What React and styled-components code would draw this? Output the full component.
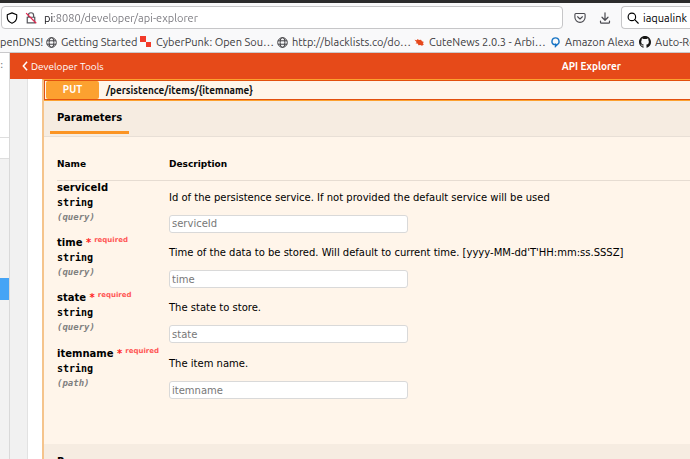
import React from "react";
import styled, { createGlobalStyle, css } from "styled-components";

const uiFont = css`
  font-family: Ubuntu, "Noto Sans", "Open Sans", sans-serif;
`;

const GlobalStyle = createGlobalStyle`
  *, *::before, *::after { box-sizing: border-box; }
  body { margin: 0; background: #fff; color: #000; font-family: "DejaVu Sans", sans-serif; font-size: 10px; }
  input, button { font: inherit; color: inherit; }
`;

const Browser = styled.div`
  display: flex;
  flex-direction: column;
  height: 100vh;
  overflow: hidden;
`;

const Chrome = styled.header`
  ${uiFont}
  flex: none;
  background: #f9f9fa;
  border-top: 3px solid #2c2c2c;
  border-bottom: 1px solid #c9c9cb;
`;

const NavBar = styled.div`
  display: flex;
  align-items: center;
  height: 29px;
  padding-left: 1px;
`;

const Field = styled.label`
  display: flex;
  align-items: center;
  height: 23px;
  background: #fff;
  border: 1px solid #c6c6c8;
  border-radius: 4px;
`;

const AddressField = styled(Field)`
  flex: 1;
  min-width: 0;
  gap: 7px;
  padding-left: 4px;
`;

const SearchField = styled(Field)`
  width: 69px;
  gap: 4px;
  padding-left: 5px;
  border-right: 0;
  border-radius: 4px 0 0 4px;
`;

const FieldInput = styled.input`
  flex: 1;
  min-width: 0;
  padding: 0;
  border: 0;
  outline: 0;
  background: transparent;
  font-size: 11px;
  line-height: 18px;
`;

const AddressInput = styled(FieldInput)`
  background: linear-gradient(to right, #15141a 10px, #77767c 10px);
  background-clip: text;
  -webkit-background-clip: text;
  color: transparent;
`;

const IconButton = styled.button`
  display: flex;
  justify-content: center;
  width: 25px;
  padding: 0;
  border: 0;
  background: none;
  color: #4a4a50;
`;

const NavActions = styled.div`
  display: flex;
  padding: 0 4px;
`;

const Bookmarks = styled.nav`
  display: flex;
  align-items: center;
  height: 20px;
`;

const Bookmark = styled.a`
  display: flex;
  align-items: center;
  flex: none;
  gap: 4px;
  width: ${(p) => p.$width}px;
  color: #3c3b40;
  font-size: 11px;
  line-height: 16px;
  text-decoration: none;
  white-space: nowrap;
`;

const Glyph = styled.svg`
  flex: none;
  width: ${(p) => p.$size}px;
  height: ${(p) => p.$size}px;
  fill: none;
  stroke: currentColor;
`;

const Workspace = styled.div`
  display: flex;
  flex: 1;
  min-height: 0;
`;

const Sidebar = styled.aside`
  display: flex;
  flex-direction: column;
  flex: none;
  width: 10px;
  background: #f2f2f2;
  border-right: 1px solid #d9d9d9;
`;

const SidebarTop = styled.div`
  height: 85px;
  padding-top: 6px;
  background: #fff;
  border-bottom: 1px solid #dedede;
  color: #777;
`;

const SidebarRow = styled.div`
  height: 21px;
  background: #fff;
  border-bottom: 1px solid #dedede;
`;

const SidebarSelected = styled.div`
  height: 22px;
  margin-top: 119px;
  background: #45a4f5;
`;

const Main = styled.main`
  display: flex;
  flex-direction: column;
  flex: 1;
  min-width: 0;
`;

const TitleBar = styled.header`
  ${uiFont}
  display: flex;
  align-items: center;
  justify-content: space-between;
  flex: none;
  height: 26px;
  padding: 0 69px 0 10px;
  background: #e64a19;
  color: #fff;
  font-size: 10px;
`;

const BackLink = styled.a`
  display: flex;
  align-items: center;
  gap: 1px;
  color: inherit;
  text-decoration: none;
`;

const PageTitle = styled.h1`
  margin: 0;
  font-size: 10px;
`;

const Canvas = styled.div`
  flex: 1;
  min-height: 0;
  padding-left: 17px;
  background: #f1f1f1;
`;

const Sheet = styled.div`
  height: 100%;
  padding-left: 14px;
  background: #fff;
  border-left: 1px solid #e2e2e2;
`;

const Operation = styled.section`
  height: 100%;
  background: #fff5ea;
  border-top: 1px solid #fca130;
  border-left: 2px solid #f5c48c;
`;

const Summary = styled.button`
  ${uiFont}
  display: flex;
  align-items: center;
  gap: 7px;
  width: 100%;
  height: 20px;
  padding: 0 0 0 1px;
  background: #fff5ea;
  border: 1px solid #e2500f;
  border-right: 0;
  color: #111;
  font-size: 10px;
  font-weight: 700;
  text-align: left;
`;

const Method = styled.span`
  width: 53px;
  height: 18px;
  background: #fca130;
  border-radius: 2px;
  color: #fff;
  line-height: 18px;
  text-align: center;
`;

const SectionHeader = styled.div`
  display: flex;
  align-items: stretch;
  height: 37px;
  padding-left: 6px;
  background: #f6ece1;
  border-top: 1px solid ${(p) => (p.$first ? "#fca130" : "#f6ece1")};
  border-bottom: 1px solid #e8dfd6;
`;

const Tab = styled.h2`
  margin: 0 0 2px;
  padding: 0 7px;
  border-bottom: 3px solid ${(p) => (p.$active ? "#fb9423" : "transparent")};
  font-size: 10px;
  line-height: 33px;
`;

const ParameterPanel = styled.div`
  height: 307px;
  padding: 15px 0 0 13px;
`;

const ParameterTable = styled.table`
  width: 100%;
  border-collapse: collapse;
  table-layout: fixed;
`;

const HeadCell = styled.th`
  width: ${(p) => p.$width || "auto"};
  height: 28px;
  padding: 0 0 3px;
  border-bottom: 1px solid #e6dcd2;
  font-size: 9px;
  text-align: left;
`;

const Cell = styled.td`
  height: ${(p) => p.$height}px;
  padding: 0;
  vertical-align: top;
  white-space: nowrap;
`;

const ParameterName = styled.label`
  display: block;
  height: 14px;
  font-weight: 700;
  line-height: 14px;
`;

const Required = styled.span`
  color: #f22;

  sup {
    margin-left: 3px;
    color: #f55;
    font-size: 7px;
    line-height: 1;
  }
`;

const ParameterType = styled.div`
  font-family: "DejaVu Sans Mono", monospace;
  font-weight: 700;
  line-height: 16px;
`;

const ParameterLocation = styled.div`
  color: #808080;
  font-family: "DejaVu Sans Mono", monospace;
  font-size: 9px;
  font-style: italic;
  font-weight: 700;
  line-height: 12px;
`;

const Description = styled.p`
  margin: 10px 0;
  line-height: 14px;
`;

const ParameterInput = styled.input`
  display: block;
  width: 239px;
  height: 18px;
  padding: 0 2px;
  background: #fff;
  border: 1px solid #d9d9d9;
  border-radius: 3px;

  &::placeholder {
    color: #777;
    opacity: 1;
  }
`;

function Globe() {
  return (
    <Glyph $size={11} viewBox="0 0 16 16" strokeWidth="1.4">
      <circle cx="8" cy="8" r="7" />
      <ellipse cx="8" cy="8" rx="3.4" ry="7" />
      <path d="M1.5 5.5h13M1.5 10.5h13" />
    </Glyph>
  );
}

function Shield() {
  return (
    <Glyph $size={12} viewBox="0 0 16 16" strokeWidth="1.5" strokeLinejoin="round">
      <path d="M8 1.2 14.3 3.6V7c0 3.5-2.5 6.5-6.3 8C4.2 13.5 1.7 10.5 1.7 7V3.6Z" />
    </Glyph>
  );
}

function InsecureLock() {
  return (
    <Glyph $size={12} viewBox="0 0 16 16" strokeWidth="1.6">
      <path d="M4.5 7V4.5a3.500 3.500 0 0 1 7 0V7M3 7h10v7.500H3Z" stroke="#55555b" />
      <path d="M1.500 1.500 15 15" stroke="#e22850" strokeWidth="1.7" />
    </Glyph>
  );
}

function Pocket() {
  return (
    <Glyph $size={12} viewBox="0 0 16 16" strokeWidth="1.5" strokeLinecap="round" strokeLinejoin="round">
      <path d="M2.500 2h11c.8 0 1.300.5 1.300 1.300V7A6.800 6.800 0 0 1 1.200 7V3.300C1.200 2.500 1.700 2 2.500 2Z" />
      <path d="m4.800 6.300 3.200 3 3.200-3" />
    </Glyph>
  );
}

function Download() {
  return (
    <Glyph $size={12} viewBox="0 0 16 16" strokeWidth="1.6" strokeLinecap="round" strokeLinejoin="round">
      <path d="M8 1v9.500M4 7l4 4 4-4M2 12v1.500c0 .8.5 1.300 1.300 1.300h9.400c.8 0 1.300-.5 1.300-1.300V12" />
    </Glyph>
  );
}

function SearchIcon() {
  return (
    <Glyph $size={12} viewBox="0 0 16 16" strokeWidth="1.5" strokeLinecap="round">
      <circle cx="6.5" cy="6.5" r="5" />
      <path d="m10.300 10.300 4.700 4.700" />
    </Glyph>
  );
}

function RedSquares() {
  return (
    <Glyph $size={12} viewBox="0 0 12 12">
      <path d="M0 0h6v6H0ZM6 6h5v5H6Z" fill="#f23b2a" stroke="none" />
    </Glyph>
  );
}

function CuteNewsIcon() {
  return (
    <Glyph $size={11} viewBox="0 0 11 11">
      <path d="M.5 2.800 3 3.200 3.400 2 5 3.100 7 2.800 8 4.300 10 5 8.800 6l1 1.400L8 8.700 6.300 8 4.300 8.300 4 6.700 1.500 6.300 2.700 5.200Z" fill="#e6491d" stroke="none" />
    </Glyph>
  );
}

function AlexaIcon() {
  return (
    <Glyph $size={11} viewBox="0 0 16 18">
      <path d="M8 1.500a5.800 5.800 0 0 1 2.800 10.900L8 14.500V11.800L5.400 12.500A5.800 5.800 0 0 1 8 1.500Z" stroke="#1573c4" strokeWidth="2.2" />
      <path d="M7 11v7l5-5.500Z" fill="#1573c4" stroke="none" />
    </Glyph>
  );
}

function GithubIcon() {
  return (
    <Glyph $size={12} viewBox="0 0 16 16">
      <path
        fill="#161514"
        stroke="none"
        d="M8 0C3.580 0 0 3.580 0 8c0 3.540 2.290 6.530 5.470 7.590.4.070.55-.17.55-.38v-1.490c-2.010.37-2.530-.49-2.690-.94-.09-.23-.48-.94-.82-1.130-.28-.15-.68-.52-.01-.53.63-.01 1.080.58 1.230.82.72 1.210 1.870.87 2.330.66.070-.52.28-.87.51-1.070-1.780-.2-3.640-.89-3.640-3.950 0-.87.31-1.590.82-2.150-.08-.2-.36-1.020.08-2.120 0 0 .67-.21 2.200.82a7.600 7.600 0 0 1 4 0c1.530-1.040 2.200-.82 2.200-.82.44 1.100.16 1.920.08 2.120.51.56.82 1.270.82 2.150 0 3.070-1.870 3.750-3.650 3.950.29.25.54.73.54 1.480v2.200c0 .21.15.46.55.38A8 8 0 0 0 16 8c0-4.420-3.580-8-8-8Z"
      />
    </Glyph>
  );
}

const bookmarks = [
  { label: "penDNS!", width: 46 },
  { label: "Getting Started", width: 94, icon: <Globe /> },
  { label: "CyberPunk: Open Sou…", width: 137, icon: <RedSquares /> },
  { label: "http://blacklists.co/do…", width: 137, icon: <Globe /> },
  { label: "CuteNews 2.0.3 - Arbi…", width: 136, icon: <CuteNewsIcon /> },
  { label: "Amazon Alexa", width: 89, icon: <AlexaIcon /> },
  { label: "Auto-Ro", width: 90, icon: <GithubIcon /> },
];

const parameters = [
  {
    name: "serviceId",
    location: "query",
    description: "Id of the persistence service. If not provided the default service will be used",
    height: 56,
  },
  {
    name: "time",
    location: "query",
    required: true,
    description: "Time of the data to be stored. Will default to current time. [yyyy-MM-dd'T'HH:mm:ss.SSSZ]",
    height: 55,
  },
  { name: "state", location: "query", required: true, description: "The state to store.", height: 56 },
  { name: "itemname", location: "path", required: true, description: "The item name.", height: 55 },
];

function ParameterRow({ parameter }) {
  const id = `param-${parameter.name}`;
  return (
    <tr>
      <Cell $height={parameter.height}>
        <ParameterName htmlFor={id}>
          {parameter.name}
          {parameter.required && (
            <Required>
              {" *"}
              <sup>required</sup>
            </Required>
          )}
        </ParameterName>
        <ParameterType>string</ParameterType>
        <ParameterLocation>({parameter.location})</ParameterLocation>
      </Cell>
      <Cell $height={parameter.height}>
        <Description>{parameter.description}</Description>
        <ParameterInput id={id} type="text" placeholder={parameter.name} />
      </Cell>
    </tr>
  );
}

export default function App() {
  return (
    <Browser>
      <GlobalStyle />
      <Chrome>
        <NavBar>
          <AddressField>
            <Shield />
            <InsecureLock />
            <AddressInput aria-label="Address" defaultValue="pi:8080/developer/api-explorer" />
          </AddressField>
          <NavActions>
            <IconButton aria-label="Save to Pocket">
              <Pocket />
            </IconButton>
            <IconButton aria-label="Downloads">
              <Download />
            </IconButton>
          </NavActions>
          <SearchField>
            <SearchIcon />
            <FieldInput aria-label="Search" defaultValue="iaqualink" />
          </SearchField>
        </NavBar>
        <Bookmarks>
          {bookmarks.map((b) => (
            <Bookmark key={b.label} href="#" $width={b.width}>
              {b.icon}
              {b.label}
            </Bookmark>
          ))}
        </Bookmarks>
      </Chrome>
      <Workspace>
        <Sidebar>
          <SidebarTop>:</SidebarTop>
          <SidebarRow />
          <SidebarSelected />
        </Sidebar>
        <Main>
          <TitleBar>
            <BackLink href="#">
              <Glyph $size={10} viewBox="0 0 8 12" strokeWidth="1.8">
                <path d="M6.500 1 2 6l4.500 5" />
              </Glyph>
              Developer Tools
            </BackLink>
            <PageTitle>API Explorer</PageTitle>
          </TitleBar>
          <Canvas>
            <Sheet>
              <Operation>
                <Summary>
                  <Method>PUT</Method>
                  /persistence/items/&#123;itemname&#125;
                </Summary>
                <SectionHeader $first>
                  <Tab $active>Parameters</Tab>
                </SectionHeader>
                <ParameterPanel>
                  <ParameterTable>
                    <thead>
                      <tr>
                        <HeadCell $width="112px">Name</HeadCell>
                        <HeadCell>Description</HeadCell>
                      </tr>
                    </thead>
                    <tbody>
                      {parameters.map((p) => (
                        <ParameterRow key={p.name} parameter={p} />
                      ))}
                    </tbody>
                  </ParameterTable>
                </ParameterPanel>
                <SectionHeader>
                  <Tab>Responses</Tab>
                </SectionHeader>
              </Operation>
            </Sheet>
          </Canvas>
        </Main>
      </Workspace>
    </Browser>
  );
}
